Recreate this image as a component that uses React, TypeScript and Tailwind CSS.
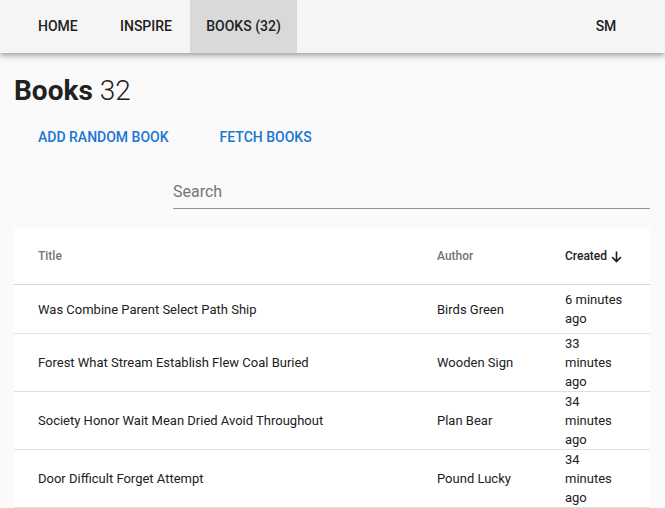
import React from "react";

type Book = { title: string; author: string; created: string };

const books: Book[] = [
  { title: "Was Combine Parent Select Path Ship", author: "Birds Green", created: "6 minutes ago" },
  { title: "Forest What Stream Establish Flew Coal Buried", author: "Wooden Sign", created: "33 minutes ago" },
  { title: "Society Honor Wait Mean Dried Avoid Throughout", author: "Plan Bear", created: "34 minutes ago" },
  { title: "Door Difficult Forget Attempt", author: "Pound Lucky", created: "34 minutes ago" },
];

function NavButton({ label, active, className }: { label: string; active?: boolean; className: string }) {
  return (
    <button
      type="button"
      className={
        (active ? "bg-[#d9d9d9] rounded-b-[2px] " : "") +
        `${className} h-full flex items-center text-[14px] font-medium uppercase text-[#212121]`
      }
    >
      {label}
    </button>
  );
}

export default function App() {
  return (
    <div className="min-h-[508px] bg-[#fafafa] font-['Roboto',sans-serif] text-[#212121]">
      <header className="relative z-10 flex h-[53px] items-stretch bg-[#f5f5f5] pl-[22px] pr-[33px] shadow-[0_2px_4px_-1px_rgba(0,0,0,0.2),0_4px_5px_0_rgba(0,0,0,0.14),0_1px_10px_0_rgba(0,0,0,0.12)]">
        <NavButton label="Home" className="w-[82px] justify-start pl-[16px]" />
        <NavButton label="Inspire" className="w-[86px] justify-start pl-[16px]" />
        <NavButton label="Books (32)" className="w-[107px] justify-center" active />
        <div className="flex-1" />
        <NavButton label="SM" className="w-[52px] justify-center" />
      </header>

      <main className="pl-[14px] pr-[15px] pt-[20px]">
        <h1 className="text-[28px] leading-[36px] text-[#212121]">
          <span className="font-bold">Books</span> <span className="font-light">32</span>
        </h1>

        <div className="mt-[10px] flex h-[36px] items-center gap-[19px] pl-[8px]">
          <button type="button" className="h-full px-[16px] text-[14px] font-medium uppercase text-[#1976d2]">
            Add random book
          </button>
          <button type="button" className="h-full px-[16px] text-[14px] font-medium uppercase text-[#1976d2]">
            Fetch books
          </button>
        </div>

        <div className="mt-[24px] flex">
          <div className="w-1/4" />
          <div className="flex h-[30px] w-3/4 items-end border-b border-[#949494] pb-[6px]">
            <span className="text-[16px] leading-[20px] text-[#757575]">Search</span>
          </div>
        </div>

        <div className="mt-[19px] bg-white">
          <div className="grid h-[57px] grid-cols-[399px_128px_1fr] items-center border-b border-[#d6d6d6] text-[12px] font-medium">
            <div className="pl-[24px] text-[#757575]">Title</div>
            <div className="pl-[24px] text-[#757575]">Author</div>
            <div className="flex items-center gap-[2px] pl-[24px] text-[#212121]">
              Created
              <svg width="15" height="15" viewBox="0 0 24 24" fill="none" stroke="currentColor" strokeWidth="2.6">
                <path d="M12 4v16M5 13l7 7 7-7" />
              </svg>
            </div>
          </div>
          {books.map((b) => (
            <div
              key={b.title}
              className="grid min-h-[49px] grid-cols-[399px_128px_1fr] items-center border-b border-[#e0e0e0] text-[13px] leading-[19px] text-[#212121]"
            >
              <div className="pl-[24px]">{b.title}</div>
              <div className="pl-[24px]">{b.author}</div>
              <div className="pl-[24px] pr-[24px]">{b.created}</div>
            </div>
          ))}
        </div>
      </main>
    </div>
  );
}
